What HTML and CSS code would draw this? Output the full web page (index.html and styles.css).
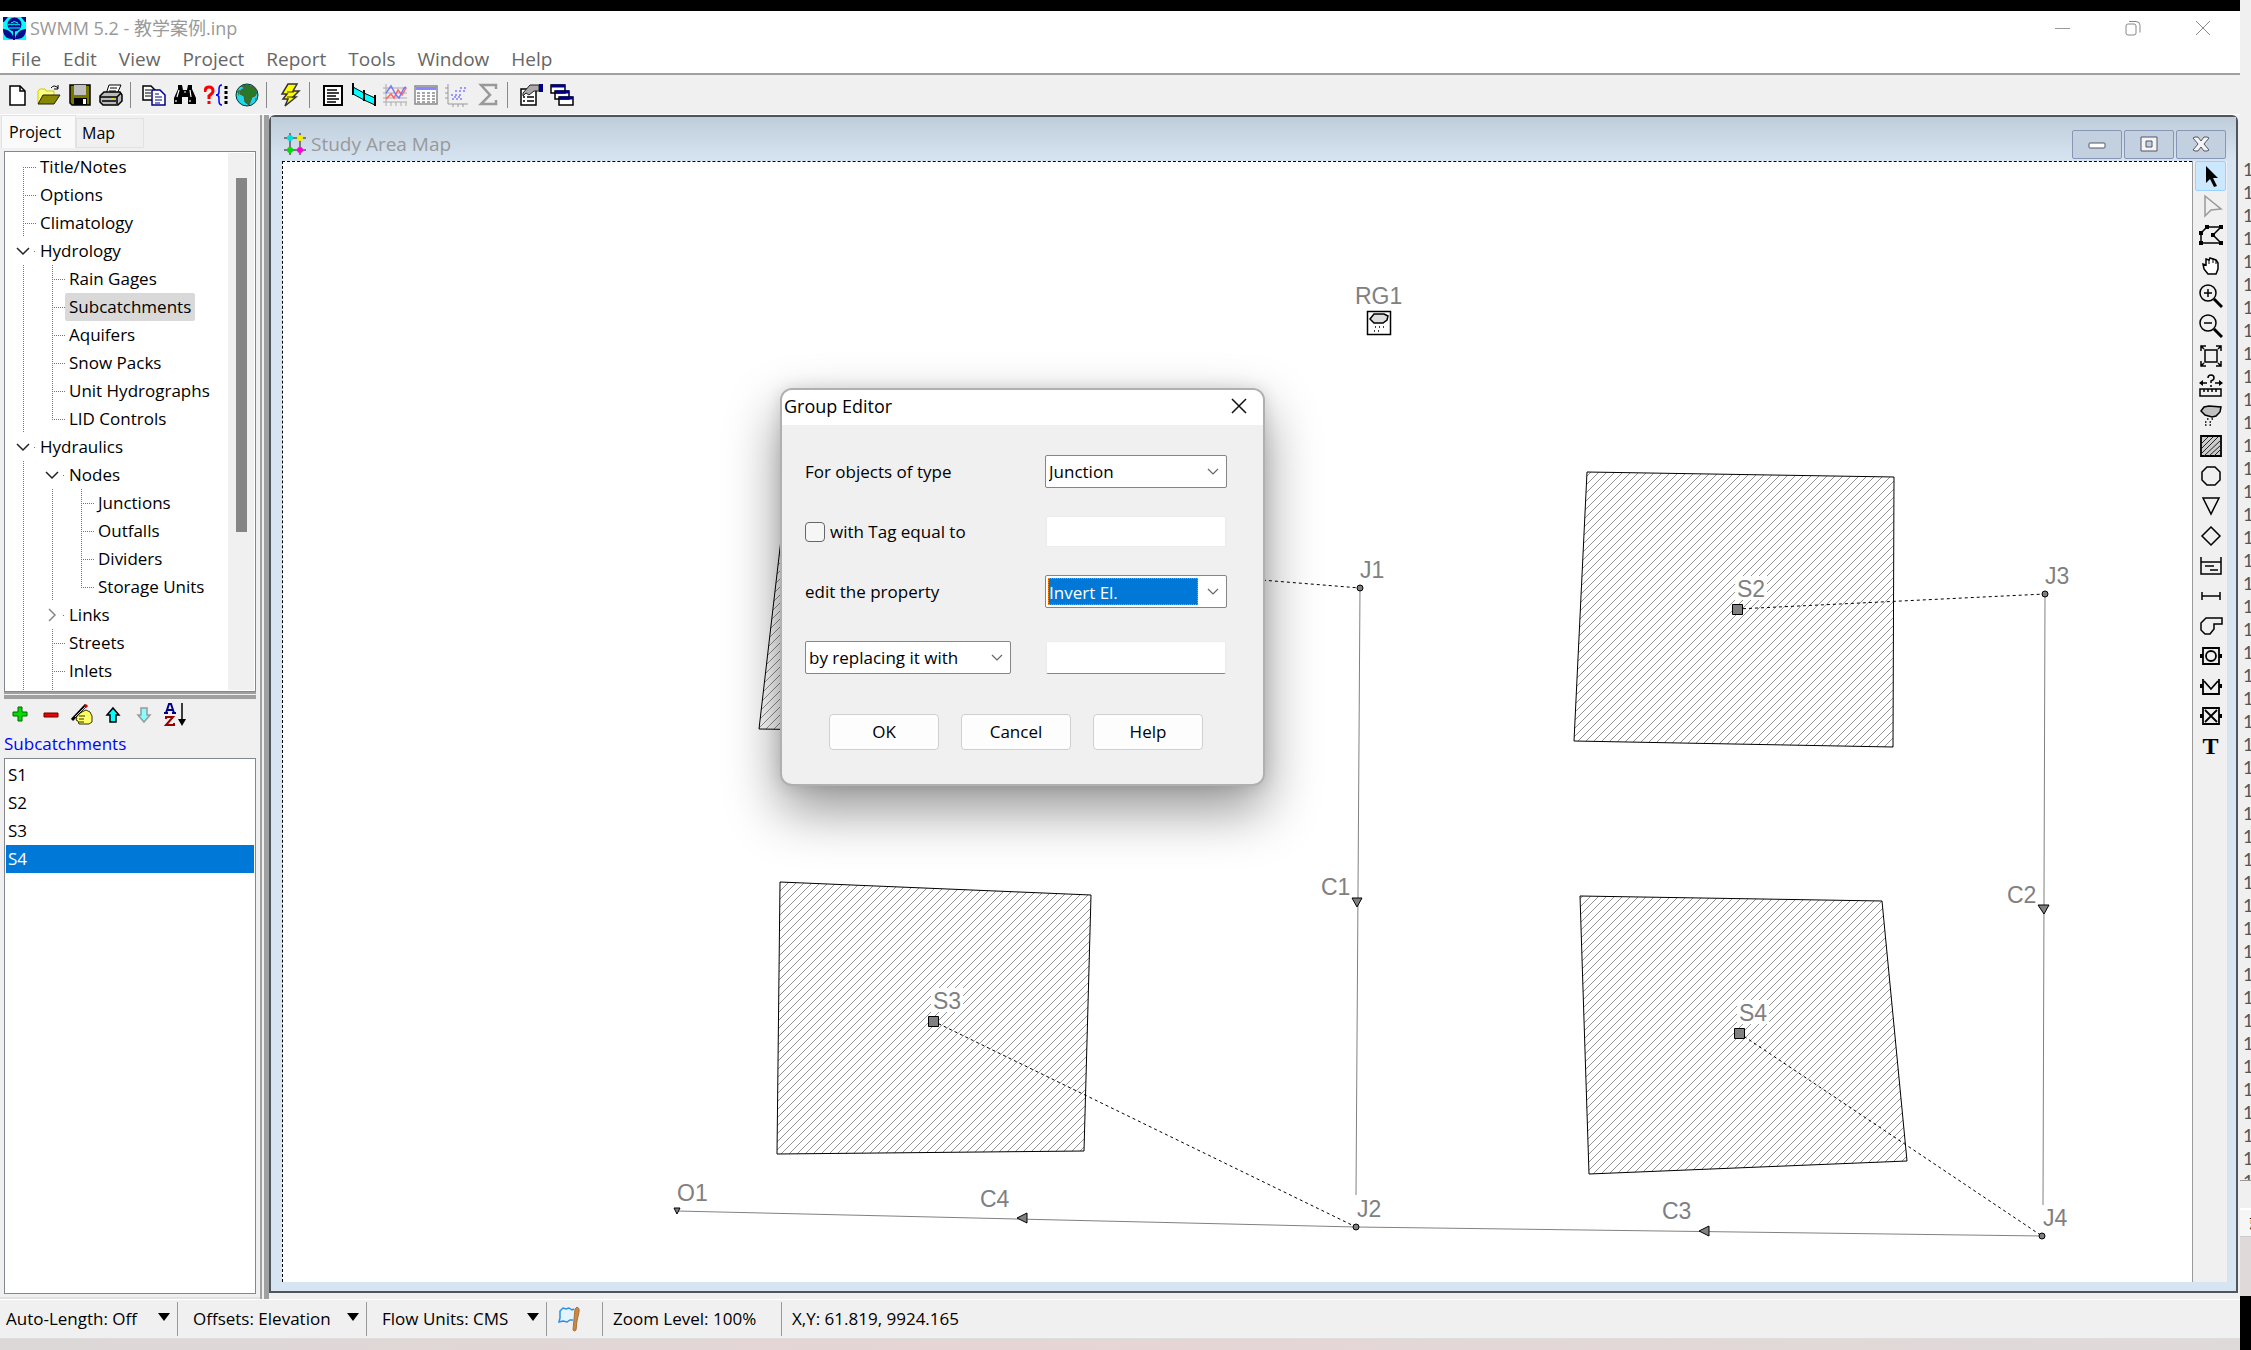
FILE: index.html
```html
<!DOCTYPE html>
<html lang="en">
<head>
<meta charset="utf-8">
<title>SWMM 5.2 - 教学案例.inp</title>
<link rel="stylesheet" href="styles.css">
</head>
<body>
<div class="screen">
<div class="app">
  <div class="top-strip"></div>
  <header class="titlebar">
    <svg class="logo" width="23" height="23" viewBox="0 0 23 23"><rect width="23" height="23" fill="#0ff"/><path d="M0 0h5L1 5H0zM23 0h-5l4 5h1zM0 12c5 0 10 4 11 10H9C3 22 0 18 0 12zM23 12c-5 0-10 4-11 10h2c6 0 9-4 9-10z" fill="#0a0a8c"/><circle cx="11.500" cy="7.500" r="7" fill="#0a0a8c"/><path d="M5 8l2-1 2 1 2-1 2 1 2-1 2 1M6 11h11" stroke="#0ff" fill="none"/><path d="M8 6q3-3 7 0" stroke="#0ff" fill="none"/><path d="M11 14v9" stroke="#0a0a8c" stroke-width="2"/></svg>
    <h1>SWMM 5.2 - 教学案例.inp</h1>
    <div class="window-controls">
      <button aria-label="Minimize"><svg width="16" height="16"><path d="M0 8.500h15" stroke="#999"/></svg></button>
      <button aria-label="Restore"><svg width="16" height="16" fill="none" stroke="#888"><rect x="1" y="4" width="10" height="11" rx="2"/><path d="M4 1.500h7q4 0 4 4v7"/></svg></button>
      <button aria-label="Close"><svg width="16" height="16"><path d="M1 1l14 14M15 1L1 15" stroke="#888"/></svg></button>
    </div>
  </header>
  <nav class="menubar">
    <button>File</button><button>Edit</button><button>View</button><button>Project</button><button>Report</button><button>Tools</button><button>Window</button><button>Help</button>
  </nav>
  <div class="toolbar">
    <button aria-label="New"><svg viewBox="0 0 24 24"><path d="M4 3h10l5 5v14H4z" fill="#fff" stroke="#000" stroke-width="1.500"/><path d="M14 3v5h5" fill="none" stroke="#000" stroke-width="1.500"/></svg></button>
    <button aria-label="Open"><svg viewBox="0 0 24 24"><path d="M1 20V8l2-2h5l1 2h8v4" fill="#ff8" stroke="#cc0"/><path d="M1 21l5-9h17l-6 9z" fill="#880" stroke="#220"/><path d="M14 5q3-4 7 0M21 2v4h-4" fill="none" stroke="#000"/></svg></button>
    <button aria-label="Save"><svg viewBox="0 0 24 24"><path d="M2 2h20v20H4l-2-2z" fill="#770" stroke="#000" stroke-width="1.500"/><path d="M6 2h12v10H6z" fill="#c0c0c0"/><path d="M6 15h13v7H6z"/><path d="M15 16h3v5h-3z" fill="#fff"/></svg></button>
    <button aria-label="Print"><svg viewBox="0 0 24 24"><path d="M7 11l3-9h12l-4 9z" fill="#fff" stroke="#000"/><path d="M11 5h7M10 8h7" stroke="#000"/><path d="M1 13l4-4h16l2 3v6l-4 4H4l-3-3z" fill="#bbb" stroke="#000" stroke-width="1.500"/><path d="M1 14h17l4-4M3 18h14M18 14v7" fill="none" stroke="#000" stroke-width="1.500"/><path d="M12 16h3" stroke="#dd0" stroke-width="2"/></svg></button>
    <i class="sep"></i>
    <button aria-label="Copy"><svg viewBox="0 0 24 24"><path d="M1 3h8l4 4v10H1z" fill="#fff" stroke="#000" stroke-width="1.500"/><path d="M3 7h6M3 10h6M3 13h6" stroke="#000"/><path d="M10 7h8l5 5v10H10z" fill="#fff" stroke="#008" stroke-width="1.500"/><path d="M13 11h4M13 14h7M13 17h7M13 20h5" stroke="#008"/></svg></button>
    <button aria-label="Find"><svg viewBox="0 0 24 24"><path d="M5 2h4l1 5h4l1-5h4v4l4 9v6h-8v-7h-6v7H1v-6l4-9z"/><path d="M6 7l-2 7M17 7l1 7M11 9h2M3 17v2M17 17v2" stroke="#fff" stroke-width="1.200"/></svg></button>
    <button aria-label="Query"><svg viewBox="0 0 24 24" fill="none"><path d="M1 9q0-5 4-5t4 4q0 2-4 5v3M5 18v3" stroke="#f00" stroke-width="3"/><path d="M18 2q-3 0-3 4v3q0 3-3 3 3 0 3 3v3q0 4 3 4" stroke="#00f" stroke-width="1.500"/><path d="M22 3v20" stroke="#000" stroke-width="3" stroke-dasharray="3 2"/></svg></button>
    <button aria-label="Overview map"><svg viewBox="0 0 24 24"><circle cx="12" cy="12" r="11" fill="#1ed8e8" stroke="#033"/><path d="M6 3l6-1 7 2 3 5-2 4-3 1-3 8-4-3-1-6-4-2 1-4 4-2z" fill="#287828" stroke="#553"/><path d="M2 8l3-1-1 6zM20 16l2-2-2 4z" fill="#287828"/></svg></button>
    <i class="sep"></i>
    <button aria-label="Run"><svg viewBox="0 0 24 24"><path d="M10 1h9l-4 7h6l-6 6h3L7 23l3-7H5l4-5H4z" fill="#ff0" stroke="#333" stroke-width="1.500"/><path d="M9 9h7M9 14h6" stroke="#333"/></svg></button>
    <i class="sep"></i>
    <button aria-label="Report"><svg viewBox="0 0 24 24"><path d="M3 3h18v19H3z" fill="#fff" stroke="#000" stroke-width="2"/><path d="M6 7h10M6 10h12M6 13h9M6 16h12M6 19h9" stroke="#000" stroke-width="1.500"/></svg></button>
    <button aria-label="Profile"><svg viewBox="0 0 24 24"><path d="M1 4l11 6 11 5v7l-11-5-11-6z" fill="#0ff" stroke="#000"/><path d="M1 0v12M12 7v11M23 12v11" stroke="#000" stroke-width="2"/></svg></button>
    <button aria-label="Graph" class="off"><svg viewBox="0 0 24 24" fill="none"><path d="M3 1v22M0 19h24M0 5h24M0 10h24M0 15h24M8 19v4M13 19v4M18 19v4M23 19v4" stroke="#aaa"/><path d="M3 16l5-5 3 4 4-8 4 5 4-7" stroke="#f66" stroke-width="1.500"/><path d="M3 10l5-7 5 9 3 3 5-10 2-1" stroke="#77f" stroke-width="1.500"/></svg></button>
    <button aria-label="Table" class="off"><svg viewBox="0 0 24 24"><path d="M1 3h22v18H1z" fill="#fff" stroke="#888" stroke-width="1.500"/><path d="M2 4h20v3H2z" fill="#88f"/><path d="M3 10h18M3 13h18M3 16h18M3 19h18" stroke="#888" stroke-dasharray="3 2" stroke-width="1.500"/></svg></button>
    <button aria-label="Scatter" class="off"><svg viewBox="0 0 24 24" fill="none"><path d="M3 1v20h20M0 5h3M0 10h3M0 15h3M8 21v3M13 21v3M18 21v3" stroke="#999"/><path d="M7 16h10M6 12h11M10 8h11M15 5h7M9 14h8" stroke="#99f" stroke-width="2" stroke-dasharray="2 2"/></svg></button>
    <button aria-label="Statistics" class="off"><svg viewBox="0 0 24 24" fill="none"><path d="M20 6V2H5l9 10-9 9h15v-4" stroke="#999" stroke-width="2.500"/></svg></button>
    <i class="sep"></i>
    <button aria-label="Options"><svg viewBox="0 0 24 24"><path d="M2 6h15v16H2z" fill="#fff" stroke="#000" stroke-width="1.500"/><path d="M4 14h2M8 14h7M4 18h2M8 18h7" stroke="#000" stroke-width="1.500"/><path d="M4 10l7-8h9v6h-5l-5 4-3-2-3 3z" fill="#aaa" stroke="#222"/><path d="M20 1h4v8h-4z" fill="#008"/></svg></button>
    <button aria-label="Cascade windows"><svg viewBox="0 0 24 24" fill="#fff" stroke="#000" stroke-width="1.500"><path d="M1 2h14v8H1zM5 8h14v8H5zM9 14h14v8H9z"/><path d="M1 3h14M5 9h14M9 15h14" stroke="#008" stroke-width="3"/></svg></button>
  </div>

  <div class="workspace">
    <aside class="sidebar">
      <div class="tabs"><button class="tab active">Project</button><button class="tab">Map</button></div>
      <div class="tree-box">
        <ul class="tree">
          <li><i class="s"></i><span>Title/Notes</span></li>
          <li><i class="t"></i><span>Options</span></li>
          <li><i class="t"></i><span>Climatology</span></li>
          <li><i class="x"><svg width="14" height="9"><path d="M1 1l6 6 6-6"/></svg></i><span>Hydrology</span></li>
          <li><i class="v"></i><i class="t"></i><span>Rain Gages</span></li>
          <li><i class="v"></i><i class="t"></i><span class="selected">Subcatchments</span></li>
          <li><i class="v"></i><i class="t"></i><span>Aquifers</span></li>
          <li><i class="v"></i><i class="t"></i><span>Snow Packs</span></li>
          <li><i class="v"></i><i class="t"></i><span>Unit Hydrographs</span></li>
          <li><i class="v"></i><i class="e"></i><span>LID Controls</span></li>
          <li><i class="x"><svg width="14" height="9"><path d="M1 1l6 6 6-6"/></svg></i><span>Hydraulics</span></li>
          <li><i class="v"></i><i class="x"><svg width="14" height="9"><path d="M1 1l6 6 6-6"/></svg></i><span>Nodes</span></li>
          <li><i class="v"></i><i class="v"></i><i class="t"></i><span>Junctions</span></li>
          <li><i class="v"></i><i class="v"></i><i class="t"></i><span>Outfalls</span></li>
          <li><i class="v"></i><i class="v"></i><i class="t"></i><span>Dividers</span></li>
          <li><i class="v"></i><i class="v"></i><i class="e"></i><span>Storage Units</span></li>
          <li><i class="v"></i><i class="x closed"><svg width="9" height="14"><path d="M1 1l6 6-6 6"/></svg></i><span>Links</span></li>
          <li><i class="v"></i><i class="t"></i><span>Streets</span></li>
          <li><i class="v"></i><i class="t"></i><span>Inlets</span></li>
          <li><i class="v"></i><i class="v"></i></li>
        </ul>
        <div class="scrollbar"><div class="thumb"></div></div>
      </div>
      <div class="hsplit"></div>
      <div class="list-tools">
        <button aria-label="Add"><svg viewBox="0 0 22 24"><path d="M9 4h4v5h5v4h-5v5H9v-5H4V9h5z" fill="#0d0" stroke="#060"/></svg></button>
        <button aria-label="Delete"><svg viewBox="0 0 22 24"><path d="M4 10h14v4H4z" fill="#e00" stroke="#600"/></svg></button>
        <button aria-label="Edit"><svg viewBox="0 0 22 24"><path d="M5 12l6-3 4-2 4 2 2 4v6l-3 2H8l-1-3-2-1 1-2-2-1z" fill="#ff6" stroke="#330"/><path d="M8 13h6M8 16h5M8 19h5" stroke="#330"/><path d="M1 17L15 2" stroke="#000" stroke-width="3"/><path d="M4 14L15 3" stroke="#ec3"/><path d="M14 4l2-2" stroke="#c00" stroke-width="3"/></svg></button>
        <button aria-label="Move up"><svg viewBox="0 0 22 24"><path d="M11 5l6 7h-3v7H8v-7H5z" fill="#0ff" stroke="#000" stroke-width="1.500"/></svg></button>
        <button aria-label="Move down"><svg viewBox="0 0 22 24"><path d="M11 19l6-7h-3V5H8v7H5z" fill="#8ff" stroke="#999" stroke-width="1.500"/></svg></button>
        <button aria-label="Sort"><svg viewBox="0 0 22 24"><path d="M2 10l3-9h2l3 9M0 10h4M8 10h4M4 7h5" fill="none" stroke="#008" stroke-width="2"/><path d="M2 16v-2h7l-7 8h8v-2" fill="none" stroke="#900" stroke-width="2"/><path d="M18 0v18" stroke="#000" stroke-width="1.500"/><path d="M14 16h8l-4 7z"/></svg></button>
      </div>
      <h2>Subcatchments</h2>
      <ul class="objects"><li>S1</li><li>S2</li><li>S3</li><li class="current">S4</li></ul>
    </aside>
    <div class="vsplit"></div>

    <main class="mdi">
      <div class="mdi-title">
        <svg width="24" height="24" viewBox="0 0 24 24"><path d="M7 1v22M17 1v22M1 6h22M1 18h22" stroke="#655" stroke-width="1.500"/><circle cx="7" cy="6" r="3" fill="#0dd"/><circle cx="17" cy="6" r="3" fill="#ee0"/><circle cx="7" cy="18" r="3" fill="#0d0"/><circle cx="17" cy="18" r="3" fill="#f0d"/></svg>
        <h2>Study Area Map</h2>
        <div class="mdi-controls">
          <button aria-label="Minimize map"><svg width="18" height="16"><rect x="1" y="7" width="16" height="5" rx="1" fill="#fff" stroke="#556"/></svg></button>
          <button aria-label="Maximize map"><svg width="18" height="16"><path d="M1 1h16v14H1zM6 5v6h6V5z" fill="#f4f4f4" fill-rule="evenodd" stroke="#556"/></svg></button>
          <button aria-label="Close map"><svg width="18" height="16"><path d="M1 2l2-1h3l3 4 3-4h3l2 1-5 6 5 6-2 1h-3l-3-4-3 4H3l-2-1 5-6z" fill="#f4f4f4" stroke="#556"/></svg></button>
        </div>
      </div>
      <div class="mdi-body">
        <div class="canvas">
          <svg class="map" viewBox="283 163 1909 1120" preserveAspectRatio="xMinYMin meet">
            <defs><pattern id="hatch" width="8" height="8" patternUnits="userSpaceOnUse"><path d="M-1 9L9 -1M-1 1L1 -1M7 9L9 7" stroke="#777" stroke-width=".8"/></pattern></defs>
            <g fill="url(#hatch)" stroke="#000">
              <polygon points="795,420 1090,430 1085,735 759,730"/>
              <polygon points="1587,473 1894,478 1893,748 1574,742"/>
              <polygon points="780,883 1091,896 1084,1152 777,1155"/>
              <polygon points="1580,897 1882,902 1907,1162 1589,1175"/>
            </g>
            <g fill="none" stroke="#808080">
              <path d="M1360 589L1356 1196M2045 595L2043 1206M677 1212L1356 1228 2042 1237"/>
            </g>
            <g fill="#fff"><path d="M1735 577h32v24h-32zM931 989h32v24h-32zM1737 1001h32v24h-32z"/></g>
            <g fill="none" stroke="#000" stroke-dasharray="3 3">
              <path d="M940 555L1360 589M1737 610L2045 595M933 1022L1356 1228M1739 1034L2042 1237"/>
            </g>
            <g fill="#808080" stroke="#000">
              <path d="M1732.500 605.500h10v10h-10zM928.500 1017.500h10v10h-10zM1734.500 1029.500h10v10h-10z"/>
              <circle cx="1360" cy="589" r="3"/><circle cx="1356" cy="1228" r="3"/><circle cx="2045" cy="595" r="3"/><circle cx="2042" cy="1237" r="3"/>
              <path d="M1352 899h10l-5 9zM2038 906h11l-5 9zM1709 1227v10l-10-5zM1027 1214v10l-10-5zM674 1209h6l-3 6z"/>
            </g>
            <rect x="1367.500" y="312.500" width="23" height="23" fill="#fff" stroke="#000" stroke-width="1.500"/>
            <path d="M1370 320l4-5h10l4 2-1 4-4 3h-9z" fill="#ddd" stroke="#000" stroke-width="1.500"/>
            <path d="M1375 328h9M1374 332h8" stroke="#000" stroke-width="1.500" stroke-dasharray="1 3"/>
            <g class="map-labels">
              <text x="1355" y="305">RG1</text><text x="1360" y="579">J1</text><text x="1737" y="598">S2</text><text x="2045" y="585">J3</text>
              <text x="1321" y="896">C1</text><text x="2007" y="904">C2</text><text x="933" y="1010">S3</text><text x="1739" y="1022">S4</text>
              <text x="677" y="1202">O1</text><text x="980" y="1208">C4</text><text x="1357" y="1218">J2</text><text x="1662" y="1220">C3</text><text x="2043" y="1227">J4</text>
            </g>
          </svg>
        </div>
        <div class="map-tools">
          <button class="on" aria-label="Select object"><svg viewBox="0 0 24 24"><path d="M7 2v17l4-4 4 8 3-1-4-8h5z"/></svg></button>
          <button aria-label="Select vertex"><svg viewBox="0 0 24 24"><path d="M6 2v20l6-6 10-1z" fill="none" stroke="#999" stroke-width="1.500"/></svg></button>
          <button aria-label="Select region"><svg viewBox="0 0 24 24"><path d="M2 19V9l6-6h14l-8 8 8 8z" fill="none" stroke="#000" stroke-width="1.500"/><path d="M6 1h4v4H6zM20 1h4v4h-4zM0 7h4v4H0zM12 9h4v4h-4zM0 17h4v4H0zM20 17h4v4h-4z"/></svg></button>
          <button aria-label="Pan"><svg viewBox="0 0 24 24"><path d="M9 20l-4-5-1-5 3 1V5l3 1 1-2 3 1 3 1 2 3v6l-2 5z" fill="#fff" stroke="#000" stroke-width="1.500"/><path d="M10 6v4M14 4v5M17 6v4" stroke="#000"/></svg></button>
          <button aria-label="Zoom in"><svg viewBox="0 0 24 24"><circle cx="9" cy="9" r="8" fill="none" stroke="#000" stroke-width="1.500"/><path d="M5 9h8M9 5v8" stroke="#000" stroke-width="1.500"/><path d="M15 15l8 8" stroke="#000" stroke-width="3"/></svg></button>
          <button aria-label="Zoom out"><svg viewBox="0 0 24 24"><circle cx="9" cy="9" r="8" fill="none" stroke="#000" stroke-width="1.500"/><path d="M5 9h8" stroke="#000" stroke-width="1.500"/><path d="M15 15l8 8" stroke="#000" stroke-width="3"/></svg></button>
          <button aria-label="Full extent"><svg viewBox="0 0 24 24" fill="none" stroke="#000" stroke-width="1.500"><path d="M6 6h12v12H6z"/><path d="M2 7V2h5M17 2h5v5M2 17v5h5M17 22h5v-5M2 2l3 3M22 2l-3 3M2 22l3-3M22 22l-3-3"/></svg></button>
          <button aria-label="Measure"><svg viewBox="0 0 24 24" fill="none" stroke="#000" stroke-width="1.500"><path d="M9 4q0-3 3-3t3 3q0 2-3 3v2M12 11v2M1 9h7M16 9h7"/><path d="M1 15h21v7H1zM5 15v3M9 15v3M13 15v3M17 15v3"/><path d="M0 9l4-3v6zM24 9l-4-3v6z" fill="#000" stroke="none"/></svg></button>
          <button aria-label="Add rain gage"><svg viewBox="0 0 24 24"><path d="M2 7l3-4 5-1 12 1-1 5-4 4-4 1-7-2z" fill="#c0c0c0" stroke="#000" stroke-width="1.500"/><path d="M8 15h9M6 18h9M6 21h8" stroke="#000" stroke-width="1.500" stroke-dasharray="1.500 3"/></svg></button>
          <button aria-label="Add subcatchment"><svg viewBox="0 0 24 24"><path d="M2 2h20v20H2z" fill="#ccc" stroke="#000" stroke-width="1.800"/><path d="M3 9l6-6M3 14L14 3M3 19L19 3M5 22L22 6M10 22l12-11M15 22l7-7" stroke="#222"/></svg></button>
          <button aria-label="Add junction"><svg viewBox="0 0 24 24"><path d="M8 3h8l5 5v8l-5 5H8l-5-5V8z" fill="none" stroke="#000" stroke-width="1.500"/></svg></button>
          <button aria-label="Add outfall"><svg viewBox="0 0 24 24"><path d="M4 4h16l-8 16z" fill="none" stroke="#000" stroke-width="1.500"/></svg></button>
          <button aria-label="Add divider"><svg viewBox="0 0 24 24"><path d="M12 3l9 9-9 9-9-9z" fill="none" stroke="#000" stroke-width="1.500"/></svg></button>
          <button aria-label="Add storage unit"><svg viewBox="0 0 24 24"><path d="M2 3v17h20V3M2 8h20M6 12h9M11 16h8" fill="none" stroke="#000" stroke-width="1.500"/></svg></button>
          <button aria-label="Add conduit"><svg viewBox="0 0 24 24"><path d="M3 12h18M3 8v8M21 8v8" stroke="#000" stroke-width="1.500"/></svg></button>
          <button aria-label="Add pump"><svg viewBox="0 0 24 24"><path d="M7 4h16v6h-8v5l-4 5H6l-4-4V9z" fill="none" stroke="#000" stroke-width="1.500"/></svg></button>
          <button aria-label="Add orifice"><svg viewBox="0 0 24 24" fill="none" stroke="#000" stroke-width="1.800"><path d="M4 4h16v16H4z"/><circle cx="12" cy="12" r="5"/><path d="M1 12h3M20 12h3" stroke-width="4"/></svg></button>
          <button aria-label="Add weir"><svg viewBox="0 0 24 24" fill="none" stroke="#000" stroke-width="1.800"><path d="M4 5v15h16V5M5 7l7 8 7-8"/><path d="M1 12h3M20 12h3" stroke-width="4"/></svg></button>
          <button aria-label="Add outlet"><svg viewBox="0 0 24 24" fill="none" stroke="#000" stroke-width="1.800"><path d="M4 4h16v16H4zM6 6l12 12M18 6L6 18"/><path d="M1 12h3M20 12h3" stroke-width="4"/></svg></button>
          <button class="label-tool" aria-label="Add label">T</button>
        </div>
      </div>
    </main>
  </div>

  <footer class="statusbar">
    <button class="cell w1">Auto-Length: Off <b></b></button>
    <button class="cell w2">Offsets: Elevation <b></b></button>
    <button class="cell w3">Flow Units: CMS <b></b></button>
    <span class="cell flag"><svg width="24" height="26" viewBox="0 0 24 26"><path d="M17 3l-2 1-3-2-3 1-3-1-3 3v7l-1 4 4-1 4 1 3-2h3" fill="#e4f4ff" stroke="#2a90e0" stroke-width="1.500"/><path d="M20 1q3 1 2 5l-2 9-1 9q-2 2-3 0l1-11 1-10z" fill="#c98a48" stroke="#a87038"/></svg></span>
    <span class="cell w5">Zoom Level: 100%</span>
    <span class="cell last">X,Y: 61.819, 9924.165</span>
  </footer>
  <div class="desktop"></div>
</div>

<div class="behind">
  <pre class="rows">1
1
1
1
1
1
1
1
1
1
1
1
1
1
1
1
1
1
1
1
1
1
1
1
1
1
1
1
1
1
1
1
1
1
1
1
1
1
1
1
1
1
1
1
1</pre>
  <div class="behind-bar"></div>
  <div class="behind-status">就</div>
  <div class="behind-desk"></div>
  <div class="behind-black"></div>
</div>
</div>

<form class="dialog" role="dialog" aria-labelledby="dlg-title">
  <div class="dialog-head"><h2 id="dlg-title">Group Editor</h2><button type="button" aria-label="Close dialog"><svg width="16" height="16"><path d="M1 1l14 14M15 1L1 15" stroke="#111" stroke-width="1.500"/></svg></button></div>
  <div class="dialog-body">
    <label for="type">For objects of type</label>
    <div class="combo"><select id="type"><option>Junction</option></select><svg width="12" height="8"><path d="M1 1l5 5 5-5"/></svg></div>
    <div class="check"><input type="checkbox" id="tag"><label for="tag">with Tag equal to</label></div>
    <input class="field flat" type="text" aria-label="Tag">
    <label for="prop">edit the property</label>
    <div class="combo focus"><select id="prop"><option>Invert El.</option></select><svg width="12" height="8"><path d="M1 1l5 5 5-5"/></svg></div>
    <div class="combo last-row"><select aria-label="Edit mode"><option>by replacing it with</option></select><svg width="12" height="8"><path d="M1 1l5 5 5-5"/></svg></div>
    <input class="field last-row" type="text" aria-label="New value">
  </div>
  <div class="dialog-actions"><button type="button">OK</button><button type="button">Cancel</button><button type="button">Help</button></div>
</form>
</body>
</html>
```
FILE: styles.css
```css
* { box-sizing: border-box; }
body {
  margin: 0;
  background: #f0f0f0;
  color: #000;
  font: 17px/28px "Open Sans", "Noto Sans", "Noto Sans CJK SC", sans-serif;
}
h1, h2 { margin: 0; font-size: inherit; font-weight: 400; }
ul { list-style: none; margin: 0; padding: 0; }
button { border: 0; padding: 0; background: none; color: inherit; font: inherit; }
svg { display: block; flex: none; }
select, input { font: inherit; color: inherit; border: 0; padding: 0; outline: 0; }

.screen { display: grid; grid-template-columns: minmax(0, 1fr) 11px; height: 100vh; }
.app { display: flex; flex-direction: column; min-width: 0; min-height: 0; }
.top-strip { height: 11px; background: #000; }

.titlebar { display: flex; align-items: center; height: 34px; padding-left: 3px; gap: 4px; background: #fff; color: #999; }
.titlebar h1 { font-size: 18px; }
.window-controls { display: flex; margin-left: auto; padding-right: 2px; }
.window-controls button { display: grid; place-items: center; width: 70px; height: 34px; }
.menubar { display: flex; align-items: center; gap: 22px; height: 28px; padding-left: 11px; background: #fff; color: #666; font-size: 19px; }
.toolbar { display: flex; align-items: center; height: 42px; padding-left: 2px; border-top: 2px solid #a0a0a0; border-bottom: 1px solid #fff; }
.toolbar button { display: grid; place-items: center; width: 31px; height: 30px; }
.toolbar svg { width: 24px; height: 24px; }
.sep { width: 12px; height: 26px; background: linear-gradient(#888, #888) 4px 0 / 1px 100% no-repeat; }

.workspace { display: flex; flex: 1; min-height: 0; }
.sidebar { display: flex; flex-direction: column; width: 260px; padding: 0 4px 3px; border-bottom: 2px solid #e2e2e2; }
.tabs { display: flex; align-items: flex-end; height: 36px; padding-bottom: 3px; margin-left: -3px; font-size: 16px; }
.tab { height: 30px; width: 68px; padding: 0 5px; border: 1px solid #e2e2e2; text-align: left; }
.tab.active { width: 75px; height: 33px; padding-left: 7px; background: #fafafa; border-bottom: 0; }
.tree-box { display: flex; height: 541px; border: 1px solid #828790; background: #fff; overflow: hidden; }
.tree { flex: 1; padding: 1px 0 0 2px; }
.tree li { display: flex; height: 28px; align-items: center; white-space: nowrap; }
.tree i {
  width: 29px; height: 28px;
  --v: repeating-linear-gradient(#777 0 1px, transparent 1px 2px) 16px;
  --h: repeating-linear-gradient(90deg, #777 0 1px, transparent 1px 2px) 16px 14px / 13px 1px no-repeat;
}
.tree .v { background: var(--v) 0 / 1px 28px no-repeat; }
.tree .t { background: var(--v) 0 / 1px 28px no-repeat, var(--h); }
.tree .e { background: var(--v) 0 / 1px 14px no-repeat, var(--h); }
.tree .s { background: var(--v) 14px / 1px 14px no-repeat, var(--h); }
.tree .x { display: flex; align-items: center; padding-left: 9px; background: repeating-linear-gradient(90deg, #777 0 1px, transparent 1px 2px) 27px 14px / 2px 1px no-repeat; }
.tree .x.closed { padding-left: 12px; }
.tree path { fill: none; stroke: #222; stroke-width: 1.500; }
.tree .closed path { stroke: #888; }
.tree span { padding: 0 4px; border-radius: 2px; }
.tree .selected { background: #d9d9d9; }
.scrollbar { width: 26px; margin: 1px; padding: 25px 7px 0 8px; background: #f0f0f0; }
.thumb { height: 354px; background: #858585; }
.hsplit { height: 7px; border-top: 2px solid #a0a0a0; border-bottom: 4px solid #a0a0a0; background: #f0f0f0; }
.list-tools { display: flex; height: 32px; align-items: center; gap: 9px; padding-left: 5px; }
.list-tools svg { width: 22px; height: 24px; }
.sidebar h2 { color: #00f; height: 28px; margin-bottom: -1px; line-height: 26px; }
.objects { flex: 1; padding: 2px 1px; border: 1px solid #828790; background: #fff; }
.objects li { padding-left: 2px; }
.objects .current { background: #0078d7; color: #fff; }
.vsplit { width: 9px; border-left: 2px solid #a0a0a0; border-right: 5px solid #a0a0a0; background: #f0f0f0; }

.mdi { display: flex; flex-direction: column; flex: 1; min-width: 0; margin: 0 2px 6px 0; border: 2px solid #50545c; border-radius: 6px 6px 0 0; background: #d7e4f2; }
.mdi-title { display: flex; align-items: center; gap: 4px; height: 44px; padding: 10px 10px 0 12px; background: linear-gradient(#bfcddb, #d7e4f2); color: #999; }
.mdi-controls { display: flex; gap: 2px; margin-left: auto; }
.mdi-controls button { display: grid; place-items: center; width: 50px; height: 29px; border: 1px solid #8796b4; border-radius: 2px; background: #c2d0e0; }
.mdi-title h2 { font-size: 19px; }
.mdi-body { display: flex; flex: 1; min-height: 0; padding: 0 9px 9px 11px; }
.canvas { flex: 1; min-width: 0; background: #fff; border-top: 1px dashed #000; border-left: 1px dashed #000; overflow: hidden; }
.map { width: 100%; height: auto; }
.map-labels { font: 23px "Liberation Sans", Arial, sans-serif; fill: #808080; }
.map-tools { display: flex; flex-direction: column; width: 35px; padding-left: 2px; border-left: 1px solid #999; background: #f0f0f0; }
.map-tools button { display: grid; place-items: center; width: 31px; height: 30px; border: 1px solid transparent; border-radius: 2px; }
.map-tools .on { background: #cce8ff; border-color: #99d1ff; }
.map-tools svg { width: 24px; height: 24px; }
.map-tools .label-tool { font: bold 24px/28px "Liberation Serif", serif; }

.statusbar { display: flex; align-items: center; height: 40px; border-top: 1px solid #fff; border-bottom: 1px solid #ddd; }
.cell { display: flex; align-items: center; height: 34px; padding-left: 10px; border-right: 1px solid #999; white-space: nowrap; }
.cell b { margin: 0 7px 4px auto; border: 6px solid transparent; border-top: 8px solid #000; border-bottom: 0; }
.w1 { width: 178px; padding-left: 6px; }
.w2 { width: 189px; padding-left: 15px; }
.w3 { width: 180px; padding-left: 15px; }
.flag { width: 56px; }
.w5 { width: 179px; }
.last { border: 0; }
.desktop { height: 11px; background: linear-gradient(90deg, #dcd8d8, #e6d5d5 45%, #dfdada); }

.behind { display: flex; flex-direction: column; overflow: hidden; background: #f0f0f0; }
.rows { margin: 0; padding: 158px 0 0 3px; height: 1180px; overflow: hidden; font: 18px/23px Lato, sans-serif; color: #555; }
.behind-bar { height: 30px; border-top: 1px solid #999; border-bottom: 2px solid #fff; }
.behind-status { height: 27px; padding-left: 9px; border-bottom: 1px solid #ccc; background: #f6f6f6; white-space: nowrap; }
.behind-desk { height: 59px; background: #e0d9d9; }
.behind-black { flex: 1; background: #000; }

/* floating window above the map */
.dialog { position: absolute; left: 780px; top: 388px; width: 485px; border: 2px solid #b0b0b0; border-radius: 12px; background: #f0f0f0; box-shadow: 0 24px 54px rgba(0, 0, 0, .42), 0 0 16px rgba(0, 0, 0, .12); overflow: hidden; }
.dialog-head { display: flex; justify-content: space-between; height: 35px; padding: 2px 16px 0 2px; background: #fff; }
.dialog-head h2 { font-size: 18px; }
.dialog-head button { display: grid; place-items: center; width: 16px; height: 28px; }
.dialog-body { display: grid; grid-template-columns: 206px 182px; grid-template-rows: 33px 31px 33px 38px; column-gap: 34px; row-gap: 28px; align-items: center; padding: 30px 0 0 23px; white-space: nowrap; }
.dialog-body .last-row { align-self: end; }
.combo { display: flex; align-items: center; width: 100%; height: 33px; padding: 2px 7px 2px 2px; border: 1px solid #858585; border-radius: 2px; background: #fff; }
.combo select { flex: 1; height: 27px; margin-right: 9px; padding-left: 1px; appearance: none; background: none; }
.combo path { fill: none; stroke: #666; stroke-width: 1.200; }
.focus select { background: #0078d7; color: #fff; border: 1px dotted #f80; padding-left: 0; }
.check { display: flex; align-items: center; gap: 5px; }
.check input { appearance: none; width: 20px; height: 20px; margin: 0; border: 1px solid #666; border-radius: 4px; background: #f6f6f6; }
.field { width: 180px; height: 33px; margin-left: 1px; background: #fff; border: 1px solid #ececec; border-bottom-color: #858585; border-radius: 2px; }
.field.flat { height: 31px; border-color: #ececec; }
.dialog-actions { display: flex; gap: 22px; padding: 40px 0 34px 47px; }
.dialog-actions button { width: 110px; height: 36px; border: 1px solid #d0d0d0; border-radius: 4px; background: #fdfdfd; }
```
